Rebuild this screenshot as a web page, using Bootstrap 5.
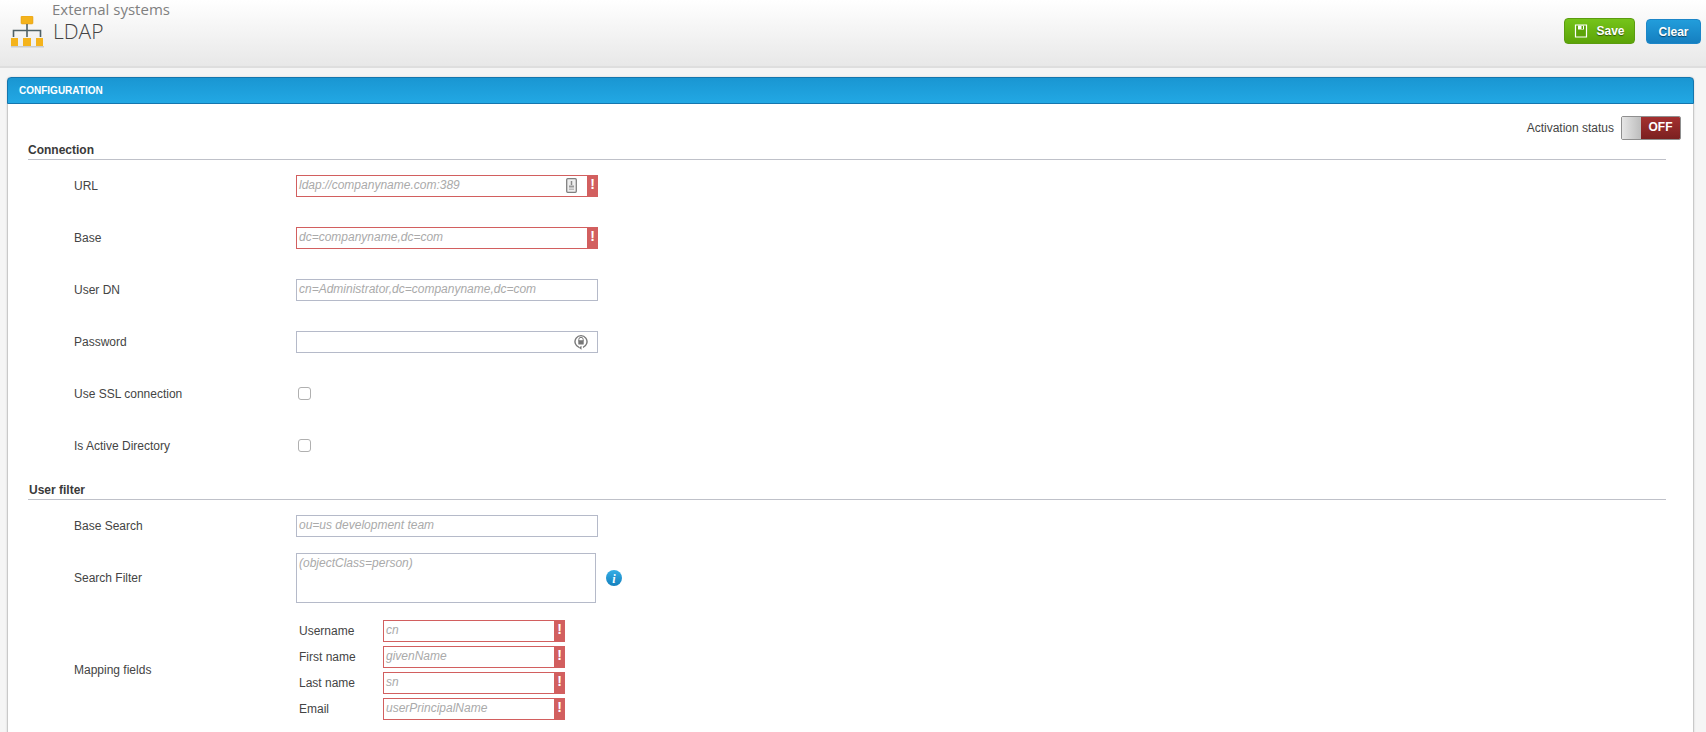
<!DOCTYPE html>
<html lang="en">
<head>
<meta charset="utf-8">
<title>LDAP</title>
<link href="https://cdn.jsdelivr.net/npm/bootstrap@5.3.0/dist/css/bootstrap.min.css" rel="stylesheet">
<style>
html,body{height:732px;overflow:hidden}
body{background:#f5f5f5;font-family:"Liberation Sans",Arial,sans-serif;font-size:12px;color:#444}
.top-head{height:68px;background:linear-gradient(#fff,#e8e8e8);border-bottom:2px solid #dedede;padding-left:10px;padding-right:5px}
.logo-box{width:36px;margin-top:16px}
.head-titles{margin-left:6px;font-family:"Open Sans",sans-serif;font-weight:300;line-height:1}
.head-sup{font-size:15px;color:#808080;height:18px;margin-top:2px;font-weight:400}
.head-main{font-size:21px;color:#444;line-height:24px;margin-top:-1px;margin-left:1px}
.act-btn{height:26px;border-radius:4px;color:#fff;font-weight:700;font-size:12px;text-shadow:0 1px 1px rgba(0,0,0,.5);padding:0;margin-top:18px}
.act-save{width:71px;background:linear-gradient(#75c41a,#5ca408);border:1px solid #5b9c10;gap:8px}
.act-clear{width:55px;background:linear-gradient(#229ddb,#157fc0);border:1px solid #1c86c8;margin-left:11px;margin-top:19px;height:25px}
.act-save:hover{color:#fff}.act-clear:hover{color:#fff}
.cfg-panel{margin:9px 12px 0 7px;height:660px;background:#fff;border:1px solid #c9c9c9;border-top:0;border-radius:4px 4px 0 0;box-shadow:0 0 2px #ccc}
.cfg-head{height:27px;margin:0 -1px;background:linear-gradient(#1a96d2,#22a8e4);border:1px solid #1576ae;border-radius:4px 4px 0 0;color:#fff;font-weight:700;font-size:10px;line-height:25px;padding-left:11px}
.cfg-body{padding:0 27px 0 20px;position:relative}
.status-line{height:24px;margin-top:12px;margin-right:-15px}
.status-txt{margin-right:7px;font-size:12px}
.toggle-off{width:60px;height:24px;border:1px solid #8f8f8f;border-radius:2px;overflow:hidden}
.toggle-knob{width:19px;background:linear-gradient(90deg,#e6e6e6,#bdbdbd)}
.toggle-lbl{flex:1;background:linear-gradient(#a33030,#7b2020);color:#fff;font-weight:700;text-align:center;line-height:20px;font-size:12px}
.sect-title{font-weight:700;color:#3a3a3a;font-size:12px;border-bottom:1px solid #bfc1c9;height:17px;line-height:15px}
.sect-conn{margin-top:3px}
.sect-user{margin-top:11px;padding-left:1px}
.frow{height:52px;padding-left:46px}
.flabel{width:222px;flex:none}
.fbox{width:302px;height:22px;border:1px solid #b5bac9;background:#fff;font-style:italic;color:#aaa;line-height:18px;padding-left:2px;position:relative;font-size:12px}
.fbox-err{border-color:#d25f5f}
.err-flag{position:absolute;right:-1px;top:-1px;bottom:-1px;width:11px;background:#d25f5f;color:#fff;font-weight:700;font-style:normal;text-align:center;line-height:19px;font-size:14px}
.ficon{position:absolute;right:9px;top:2px}
.err-icon{right:20px}
.cbx{width:13px;height:13px;border:1px solid #b0b0b0;border-radius:3px;background:#fff;margin-left:2px;margin-bottom:1px}
.frow-area{height:52px;padding-left:46px;margin-bottom:14px}
.farea{width:300px;height:50px;border:1px solid #b5bac9;font-style:italic;color:#aaa;padding:1px 2px;line-height:16px}
.info-dot{margin-left:10px}
.frow-map{padding-left:46px}
.map-line{height:26px}
.map-lbl{width:87px;padding-left:3px;flex:none}
.fbox-map{width:182px}
</style>
</head>
<body>
<header class="top-head d-flex align-items-start">
  <div class="logo-box">
    <svg width="36" height="32" viewBox="0 0 36 32">
      <rect x="11" y="0" width="12" height="8" rx="1" fill="#f4b31c" stroke="#e29a10" stroke-width=".5"/>
      <path d="M3.500 21V14.500H30.500V21M17 8V21" fill="none" stroke="#4f6166" stroke-width="1.600"/>
      <rect x="1" y="22" width="7" height="8" fill="#f4b31c"/><rect x="13" y="22" width="8" height="8" fill="#f4b31c"/><rect x="26" y="22" width="7" height="8" fill="#f4b31c"/>
      <rect x="1" y="30" width="33" height="1.500" fill="#ccc"/>
    </svg>
  </div>
  <div class="head-titles">
    <div class="head-sup">External systems</div>
    <div class="head-main">LDAP</div>
  </div>
  <div class="ms-auto d-flex align-items-start">
    <button class="btn act-btn act-save d-flex align-items-center justify-content-center">
      <svg width="14" height="14" viewBox="0 0 14 14"><path d="M1.500 1h11v12h-11z" fill="#5ca408" stroke="#fff" stroke-width="1.200"/><path d="M4 1.500h6v4H4z" fill="#fff"/><path d="M7.500 2h1.500v3H7.500z" fill="#5ca408"/></svg>
      <span>Save</span>
    </button>
    <button class="btn act-btn act-clear">Clear</button>
  </div>
</header>
<main class="cfg-panel">
  <div class="cfg-head">CONFIGURATION</div>
  <div class="cfg-body">
    <div class="status-line d-flex justify-content-end align-items-center">
      <span class="status-txt">Activation status</span>
      <span class="toggle-off d-flex"><span class="toggle-knob"></span><span class="toggle-lbl">OFF</span></span>
    </div>
    <div class="sect-title sect-conn">Connection</div>
    <div class="frow d-flex align-items-center">
      <div class="flabel">URL</div>
      <div class="fbox fbox-err">ldap://companyname.com:389
        <svg class="ficon err-icon" width="11" height="15" viewBox="0 0 11 15"><rect x=".7" y=".7" width="9.600" height="13.600" rx="1" fill="#eee" stroke="#808080" stroke-width="1.300"/><path d="M5.500 3v4" stroke="#888" stroke-width="1.500"/><path d="M3 7.500h5v2H3z" fill="#999"/><path d="M3 10.500h5v1.500H3z" fill="#bbb"/></svg>
        <span class="err-flag">!</span>
      </div>
    </div>
    <div class="frow d-flex align-items-center">
      <div class="flabel">Base</div>
      <div class="fbox fbox-err">dc=companyname,dc=com<span class="err-flag">!</span></div>
    </div>
    <div class="frow d-flex align-items-center">
      <div class="flabel">User DN</div>
      <div class="fbox">cn=Administrator,dc=companyname,dc=com</div>
    </div>
    <div class="frow d-flex align-items-center">
      <div class="flabel">Password</div>
      <div class="fbox">
        <svg class="ficon" width="14" height="16" viewBox="0 0 14 16"><path d="M5 13.300A6 6 0 1 1 9 13.300" fill="none" stroke="#777" stroke-width="1.400"/><path d="M4.800 5.500a2.200 2.200 0 0 1 4.400 0v1.500H4.800z" fill="none" stroke="#777"/><rect x="4.300" y="6.500" width="5.400" height="4" rx=".5" fill="#777"/><path d="M7.500 11.800v4L4.800 13.800z" fill="#777"/></svg>
      </div>
    </div>
    <div class="frow d-flex align-items-center">
      <div class="flabel">Use SSL connection</div>
      <div class="cbx"></div>
    </div>
    <div class="frow d-flex align-items-center">
      <div class="flabel">Is Active Directory</div>
      <div class="cbx"></div>
    </div>
    <div class="sect-title sect-user">User filter</div>
    <div class="frow d-flex align-items-center">
      <div class="flabel">Base Search</div>
      <div class="fbox">ou=us development team</div>
    </div>
    <div class="frow-area d-flex align-items-center">
      <div class="flabel">Search Filter</div>
      <div class="farea">(objectClass=person)</div>
      <svg class="info-dot" width="16" height="16" viewBox="0 0 16 16"><defs><linearGradient id="infog" x1="0" y1="0" x2="0" y2="1"><stop offset="0" stop-color="#35aee6"/><stop offset="1" stop-color="#1480bd"/></linearGradient></defs><circle cx="8" cy="8" r="8" fill="url(#infog)"/><text x="8" y="12.500" text-anchor="middle" font-family="Liberation Serif" font-style="italic" font-weight="700" font-size="12" fill="#fff">i</text></svg>
    </div>
    <div class="frow-map d-flex align-items-center">
      <div class="flabel">Mapping fields</div>
      <div>
        <div class="map-line d-flex align-items-center"><div class="map-lbl">Username</div><div class="fbox fbox-err fbox-map">cn<span class="err-flag">!</span></div></div>
        <div class="map-line d-flex align-items-center"><div class="map-lbl">First name</div><div class="fbox fbox-err fbox-map">givenName<span class="err-flag">!</span></div></div>
        <div class="map-line d-flex align-items-center"><div class="map-lbl">Last name</div><div class="fbox fbox-err fbox-map">sn<span class="err-flag">!</span></div></div>
        <div class="map-line d-flex align-items-center"><div class="map-lbl">Email</div><div class="fbox fbox-err fbox-map">userPrincipalName<span class="err-flag">!</span></div></div>
      </div>
    </div>
  </div>
</main>
<script src="https://cdn.jsdelivr.net/npm/bootstrap@5.3.0/dist/js/bootstrap.bundle.min.js"></script>
</body>
</html>
